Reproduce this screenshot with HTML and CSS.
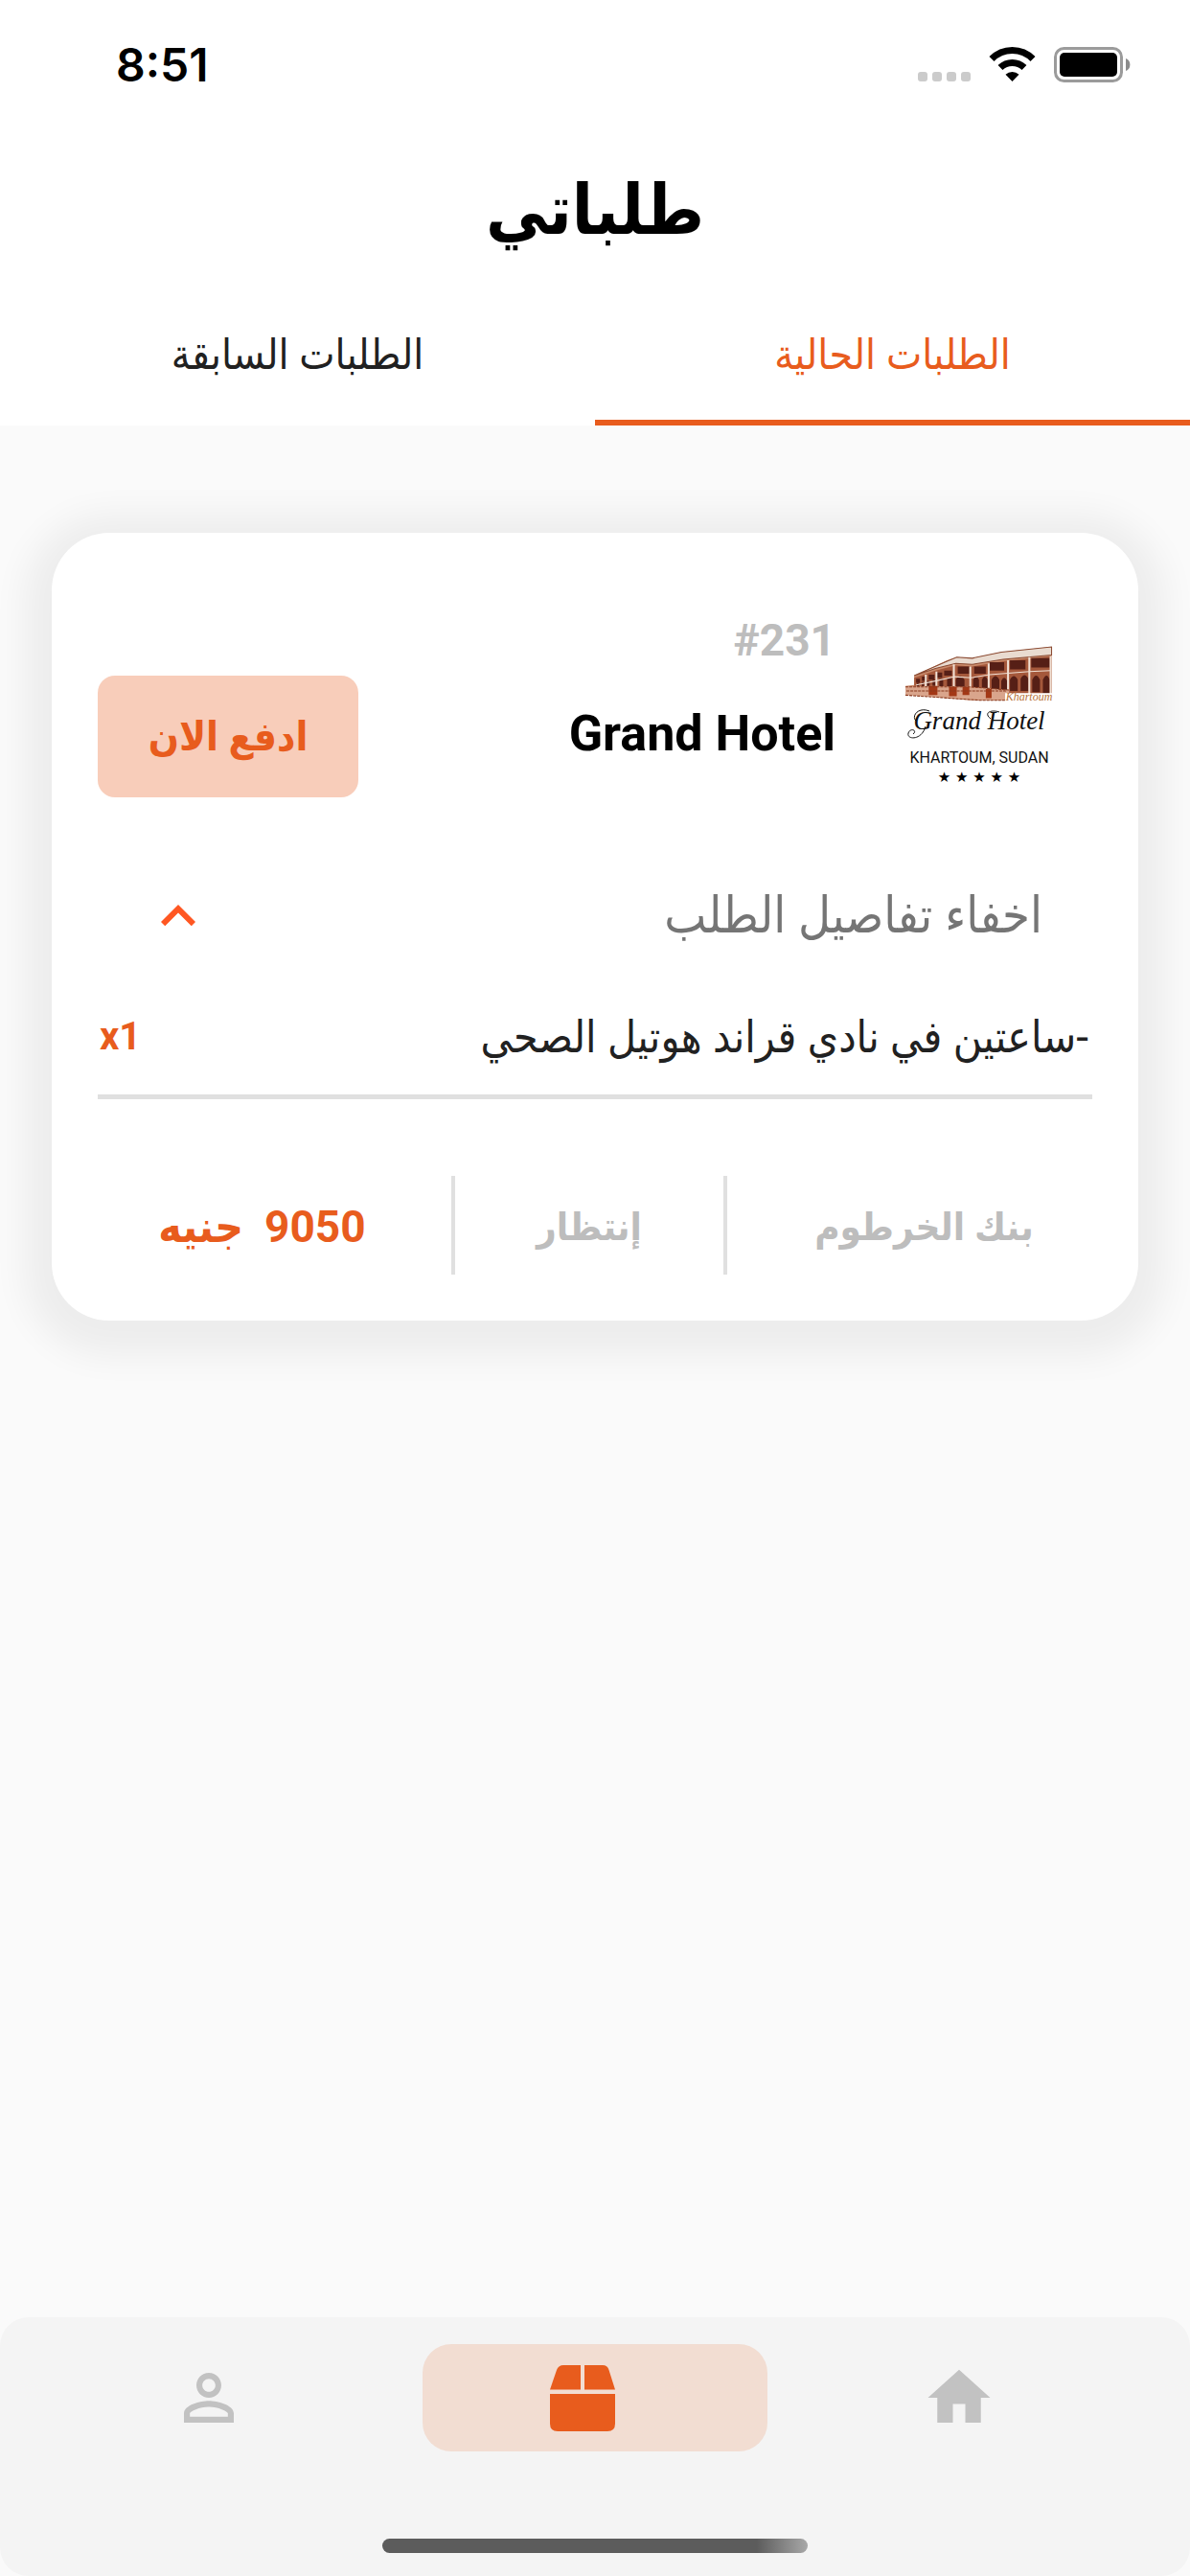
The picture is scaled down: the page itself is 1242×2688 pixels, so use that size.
FILE: index.html
```html
<!DOCTYPE html>
<html lang="ar" dir="rtl">
<head>
    <meta charset="UTF-8">
    <meta name="viewport" content="width=device-width, initial-scale=1.0">
    <title>طلباتي</title>
    <link rel="stylesheet" href="styles.css">
</head>

<body>

    <header class="header">
        <div class="status-bar">
            <span class="time">8:51</span>
            <svg class="status-icons" width="224" height="40" viewBox="0 0 224 40">
                <g fill="#cbcbcb">
                    <rect x="0" y="27" width="10" height="10" rx="3"/>
                    <rect x="15" y="27" width="10" height="10" rx="3"/>
                    <rect x="30" y="27" width="10" height="10" rx="3"/>
                    <rect x="45" y="27" width="10" height="10" rx="3"/>
                </g>
                <g fill="none" stroke="#000" stroke-width="7">
                    <path d="M77 13.500 A30 30 0 0 1 120 13.500"/>
                    <path d="M86 22.500 A18 18 0 0 1 111 22.500"/>
                </g>
                <path d="M98.500 37 L91.500 29.800 A10 10 0 0 1 105.500 29.800 Z"/>
                <rect x="143.500" y="2.500" width="69" height="34" rx="9" fill="none" stroke="#9b9b9b" stroke-width="3"/>
                <rect x="148" y="7" width="60" height="25" rx="5"/>
                <path d="M217 13 a7 7 0 0 1 0 13 Z" fill="#8c8c8c"/>
            </svg>
        </div>
        <h1 class="title">طلباتي</h1>
        <nav class="tabs">
            <a class="tab active" href="#current">الطلبات الحالية</a>
            <a class="tab" href="#previous">الطلبات السابقة</a>
        </nav>
    </header>

    <main class="orders" id="current">
        <article class="card">
            <div class="card-top">
                <svg class="logo" width="160" height="150" viewBox="0 0 160 150">
                    <!-- building -->
                    <g transform="scale(1.010 1.070)">
                        <path d="M12 29 L46 14 L56 11 L72 12 L102 6 L154 1 V50 L106 53 L70 53 L3 47 V39 L12 38 Z" fill="#c98a6b"/>
                        <path d="M12 29 L46 15 L56 11 L72 12 L102 6 L154 1 V9 L104 13 L72 18 L55 17 L34 22 Z" fill="#e9dbd0" stroke="#8a4a32" stroke-width="1"/>
                        <path d="M12 31 L34 24 L55 19 L72 20 L104 15 L154 10 V47 L104 46 L72 40 L12 39 Z" fill="#a5583b"/>
                        <g fill="#561f16">
                            <path d="M14 32h4v4h-4zM20 30h5v4h-5zM27 28h6v5h-6zM35 26h6v5h-6zM43 24h8v5h-8zM57 20h12v7H57zM74 20h12v7H74zM90 16h15v8H90zM111 14h16v9h-16zM133 12h19v9h-19z"/>
                            <path d="M15 40v-4h2v4zM20 40v-5h2v5zM25 41v-7h3v7zM31 41v-8h3v8zM38 41v-9h4v9zM46 41v-10h5v10zM55 41v-8q4-7 9 0v8zM73 42v-9q3-6 6 0v9zM82 42v-9q3-6 6 0v9zM92 43v-10q4-7 8 0v10zM102 43v-9q3-6 6 0v9zM111 44V33q4-7 8 0v11zM122 44V32q4-7 8 0v12zM134 45V33q4-8 8 0v12zM145 46V33q4-8 7 0v13z"/>
                        </g>
                        <g fill="none" stroke="#f1e1d5" stroke-width="2">
                            <path d="M53 18V43M70 20V42M89 17V44M109 14V46M131 11V47M153 10V50M35 25V41M24 28V40"/>
                            <path d="M14 38L35 34L54 30L71 31L90 28L131 25L153 24" stroke-width="1"/>
                        </g>
                        <path d="M3 40 L30 39 L70 40 L110 43 V52 L80 53 L3 48 Z" fill="#d9a58c"/>
                        <path d="M27 39h9v9h-9zM48 40h8v9h-8zM62 40h7v8h-7zM86 42h6v9h-6z" fill="#a33816"/>
                        <path d="M3 40H28L70 40L110 43M3 48L80 53H108M4 44H108" fill="none" stroke="#8a3a1e" stroke-width="1" stroke-dasharray="3 1"/>
                        <path d="M106 46 L156 46 V56 H106 Z" fill="#fff"/>
                    </g>
                    <text class="logo-place" x="132" y="57">Khartoum</text>
                    <!-- lettering -->
                    <text class="logo-script" x="80" y="87">Grand Hotel</text>
                    <path d="M24 84 C20 99 4 98 6 91 C8 85 16 88 11 92 M28 68 C16 63 8 74 15 79" fill="none" stroke="#111" stroke-width="1"/>
                    <path d="M92 76 C84 70 92 66 101 69" fill="none" stroke="#111" stroke-width="1"/>
                    <text class="logo-city" x="80" y="122">KHARTOUM, SUDAN</text>
                    <text class="logo-stars" x="80" y="142">★ ★ ★ ★ ★</text>
                </svg>
                <div class="vendor">
                    <span class="order-no" dir="ltr">#231</span>
                    <h2 class="vendor-name">Grand Hotel</h2>
                </div>
                <button class="pay" type="button">ادفع الان</button>
            </div>

            <button class="details" type="button" aria-expanded="true">
                <span>اخفاء تفاصيل الطلب</span>
                <svg width="72" height="72" viewBox="0 0 24 24"><path d="M12 8l-6 6 1.410 1.410L12 10.830l4.590 4.580L18 14z" fill="#ff5722"/></svg>
            </button>

            <div class="item">
                <span>-ساعتين في نادي قراند هوتيل الصحي</span>
                <span class="qty" dir="ltr">x1</span>
            </div>

            <div class="summary">
                <span class="bank">بنك الخرطوم</span>
                <span class="state">إنتظار</span>
                <span class="price"><span>9050</span><span>جنيه</span></span>
            </div>
        </article>
    </main>

    <footer class="bottom">
        <nav class="bottom-nav">
            <a class="nav-item" href="#home" aria-label="الرئيسية">
                <svg width="78" height="78" viewBox="0 0 24 24"><path d="M10 20v-6h4v6h5v-8h3L12 3 2 12h3v8z"/></svg>
            </a>
            <a class="nav-item selected" href="#orders" aria-label="طلباتي">
                <svg width="68" height="69" viewBox="0 0 68 69">
                    <path d="M0 25.500 L7 5 Q9 0 14 0 H32 V25.500 Z"/>
                    <path d="M36 25.500 V0 H55 Q60 0 61.500 5 L68 25.500 Z"/>
                    <path d="M0 30 H68 V61 Q68 69 60 69 H8 Q0 69 0 61 Z"/>
                </svg>
            </a>
            <a class="nav-item profile" href="#profile" aria-label="حسابي">
                <svg width="78" height="78" viewBox="0 0 24 24"><path d="M12 5.900c1.160 0 2.100.940 2.100 2.100s-.940 2.100-2.100 2.100S9.900 9.160 9.900 8s.940-2.100 2.100-2.100m0 9c2.970 0 6.100 1.460 6.100 2.100v1.100H5.900V17c0-.640 3.130-2.100 6.100-2.100M12 4C9.790 4 8 5.790 8 8s1.790 4 4 4 4-1.790 4-4-1.790-4-4-4zm0 9c-2.670 0-8 1.340-8 4v3h16v-3c0-2.660-5.330-4-8-4z"/></svg>
            </a>
        </nav>
        <div class="home-bar"></div>
    </footer>

</body>
</html>
```
FILE: styles.css
```css
* {
    box-sizing: border-box;
}

body {
    margin: 0;
    min-height: 100vh;
    display: flex;
    flex-direction: column;
    background-color: #fafafa;
    color: #212121;
    font-family: Roboto, "DejaVu Sans Condensed", "DejaVu Sans", sans-serif;
    font-size: 44px;
    line-height: 60px;
}

a {
    color: inherit;
    text-decoration: none;
}

button {
    border: none;
    background: none;
    font: inherit;
    cursor: pointer;
}

svg {
    display: block;
}

/* Header */
.header {
    background-color: white;
}

.status-bar {
    direction: ltr;
    display: flex;
    justify-content: space-between;
    align-items: center;
    height: 136px;
    padding: 0 60px 0 121px;
}

.time {
    color: black;
    font-family: Inter, sans-serif;
    font-size: 48px;
    font-weight: 600;
}

.title {
    margin: 0;
    padding: 36px 0;
    color: black;
    font-size: 72px;
    line-height: 96px;
    text-align: center;
}

.tabs {
    display: flex;
}

.tab {
    flex: 1;
    height: 140px;
    padding-top: 36px;
    text-align: center;
}

.tab.active {
    color: #e85c1d;
    border-bottom: 6px solid #e85c1d;
}

/* Order card */
.orders {
    flex: 1;
    padding: 112px 54px 54px;
}

.card {
    padding: 80px 48px 48px;
    border-radius: 60px;
    background-color: white;
    box-shadow: 0 9px 36px 28px rgba(0, 0, 0, 0.055);
}

.card-top {
    display: flex;
    min-height: 196px;
}

.logo {
    direction: ltr;
    margin-top: 38px;
    margin-right: 38px;
}

.logo text {
    text-anchor: middle;
}

.logo-place {
    fill: #b8733a;
    font-family: "Liberation Serif", serif;
    font-size: 12px;
    font-style: italic;
}

.logo-script {
    fill: #111;
    font-family: "Liberation Serif", serif;
    font-size: 27px;
    font-style: italic;
}

.logo-city {
    fill: #111;
    font-family: Roboto, sans-serif;
    font-size: 16px;
}

.logo-stars {
    font-family: "DejaVu Sans", sans-serif;
    font-size: 15px;
}

.vendor {
    margin-right: 70px;
    display: flex;
    flex-direction: column;
    gap: 34px;
}

.order-no {
    color: #bdbdbd;
    font-size: 46px;
    font-weight: bold;
    line-height: 64px;
    text-align: right;
}

.vendor-name {
    margin: 0;
    color: black;
    font-size: 52px;
    line-height: 64px;
}

.pay {
    align-self: flex-end;
    width: 272px;
    height: 127px;
    margin-right: auto;
    border-radius: 18px;
    background-color: #f8cdba;
    color: #e85c1d;
    font-size: 42px;
    font-weight: bold;
}

.details {
    display: flex;
    justify-content: space-between;
    align-items: center;
    width: 100%;
    margin-top: 88px;
    padding: 0 52px 0 48px;
    color: #757575;
    font-size: 52px;
}

.item {
    display: flex;
    justify-content: space-between;
    margin-top: 60px;
    padding: 0 4px 30px 2px;
    border-bottom: 5px solid #e0e0e0;
    font-size: 46px;
}

.qty {
    color: #e85c1d;
    font-size: 40px;
    font-weight: bold;
}

.summary {
    display: grid;
    grid-template-columns: 381fr 288fr 369fr;
    margin-top: 80px;
    color: #bdbdbd;
    font-size: 40px;
    font-weight: bold;
    line-height: 99px;
    text-align: center;
}

.bank, .state, .price {
    padding-top: 4px;
}

.bank {
    padding-left: 30px;
}

.state {
    border-left: 4px solid #e0e0e0;
    border-right: 4px solid #e0e0e0;
}

.price {
    display: flex;
    justify-content: center;
    gap: 22px;
    padding-right: 26px;
    color: #e85c1d;
    font-size: 46px;
}

/* Bottom navigation */
.bottom {
    height: 270px;
    padding-top: 28px;
    border-radius: 30px;
    background-color: #f4f4f4;
}

.bottom-nav {
    display: grid;
    grid-template-columns: 1fr 360px 1fr;
    height: 112px;
}

.nav-item {
    display: flex;
    justify-content: center;
    align-items: center;
    padding-right: 42px;
    fill: #c2c2c2;
}

.nav-item.selected {
    padding-right: 26px;
    border-radius: 30px;
    background-color: #f2ddd2;
    fill: #e85c1d;
}

.nav-item.profile {
    padding-right: 6px;
}

.home-bar {
    width: 444px;
    height: 15px;
    margin: 91px auto 0;
    border-radius: 8px;
    background: linear-gradient(to right, #5c5c5c 88%, #a8a8a8);
}
```
